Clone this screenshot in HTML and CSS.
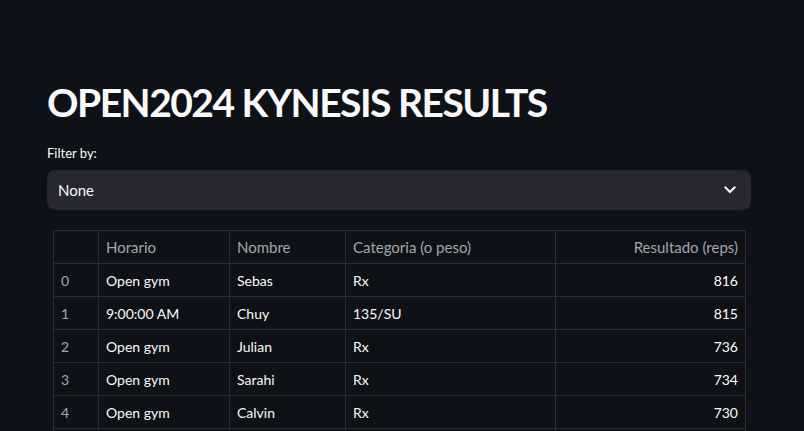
FILE: index.html
```html
<!DOCTYPE html>
<html>
<head>
<meta charset="utf-8">
<link rel="stylesheet" href="styles.css">
</head>
<body>
<main class="main">
  <h1 class="title">OPEN2024 KYNESIS RESULTS</h1>
  <div class="field">
    <label class="label">Filter by:</label>
    <div class="select">
      <span class="select-value">None</span>
      <svg class="chevron" width="12" height="8" viewBox="0 0 12 8"><path d="M1.5 1.5 L6 6 L10.5 1.5" fill="none" stroke="#fafafa" stroke-width="2" stroke-linecap="square"/></svg>
    </div>
  </div>
  <div class="grid-wrap">
    <table class="grid">
      <colgroup>
        <col class="c-idx"><col class="c-hor"><col class="c-nom"><col class="c-cat"><col class="c-res">
      </colgroup>
      <thead>
        <tr><th></th><th>Horario</th><th>Nombre</th><th>Categoria (o peso)</th><th class="num">Resultado (reps)</th></tr>
      </thead>
      <tbody>
        <tr><td class="idx">0</td><td>Open gym</td><td>Sebas</td><td>Rx</td><td class="num">816</td></tr>
        <tr><td class="idx">1</td><td>9:00:00 AM</td><td>Chuy</td><td>135/SU</td><td class="num">815</td></tr>
        <tr><td class="idx">2</td><td>Open gym</td><td>Julian</td><td>Rx</td><td class="num">736</td></tr>
        <tr><td class="idx">3</td><td>Open gym</td><td>Sarahi</td><td>Rx</td><td class="num">734</td></tr>
        <tr><td class="idx">4</td><td>Open gym</td><td>Calvin</td><td>Rx</td><td class="num">730</td></tr>
        <tr><td class="idx"></td><td></td><td></td><td></td><td class="num"></td></tr>
      </tbody>
    </table>
  </div>
</main>
</body>
</html>
```
FILE: styles.css
```css
html, body {
  margin: 0;
  background: #0e1117;
  color: #fafafa;
  font-family: "Lato", "Noto Sans", sans-serif;
  overflow: hidden;
}
.main {
  padding: 78px 53px 0 47px;
  width: 704px;
}
.title {
  margin: 0;
  font-size: 39px;
  font-weight: 700;
  line-height: 48px;
  letter-spacing: -1.5px;
  color: #fafafa;
}
.field {
  margin-top: 18px;
}
.label {
  display: block;
  font-size: 13px;
  line-height: 18px;
  color: #fafafa;
  margin-bottom: 8px;
}
.select {
  height: 40px;
  background: #262730;
  border-radius: 8px;
  display: flex;
  align-items: center;
  justify-content: space-between;
  padding: 0 15px 0 11px;
}
.select-value {
  font-size: 15px;
}
.chevron {
  display: block;
}
.grid-wrap {
  margin: 20px 6px 0 6px;
}
.grid {
  border-collapse: collapse;
  width: 692px;
  table-layout: fixed;
  font-size: 14px;
}
.c-idx { width: 45px; }
.c-hor { width: 131px; }
.c-nom { width: 116px; }
.c-cat { width: 210px; }
.c-res { width: 190px; }
.grid th, .grid td {
  border: 1px solid #2a2c33;
  height: 32px;
  padding: 0 7px;
  text-align: left;
  white-space: nowrap;
  overflow: hidden;
  font-weight: 400;
}
.grid th {
  color: #a3a6ad;
  font-size: 15px;
}
.grid td.idx {
  color: #a3a6ad;
  padding-left: 7px;
}
.grid .num {
  text-align: right;
}
```
